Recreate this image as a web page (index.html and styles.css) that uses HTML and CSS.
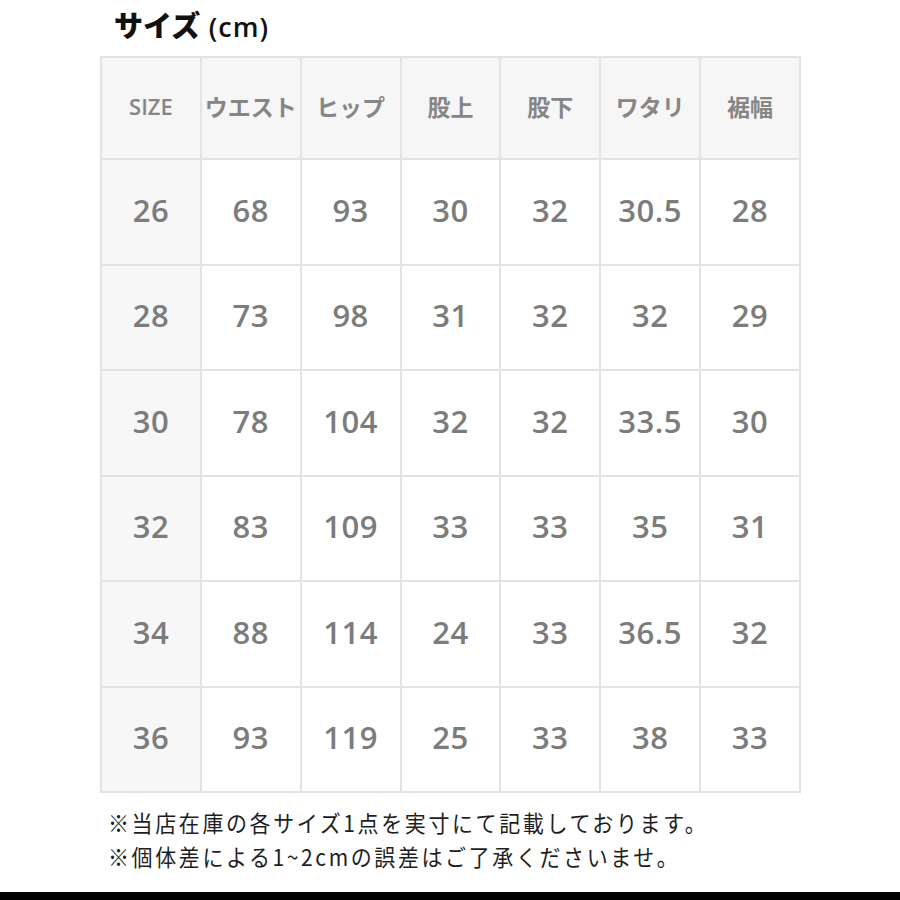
FILE: index.html
```html
<!DOCTYPE html>
<html lang="ja">
<head>
<meta charset="utf-8">
<link rel="stylesheet" href="styles.css">
</head>
<body>
<div class="page">
  <h1 class="title">サイズ <span class="unit">(cm)</span></h1>
  <table class="size-table">
    <thead>
      <tr><th>SIZE</th><th>ウエスト</th><th>ヒップ</th><th>股上</th><th>股下</th><th>ワタリ</th><th>裾幅</th></tr>
    </thead>
    <tbody>
      <tr><td class="sz">26</td><td>68</td><td>93</td><td>30</td><td>32</td><td>30.5</td><td>28</td></tr>
      <tr><td class="sz">28</td><td>73</td><td>98</td><td>31</td><td>32</td><td>32</td><td>29</td></tr>
      <tr><td class="sz">30</td><td>78</td><td>104</td><td>32</td><td>32</td><td>33.5</td><td>30</td></tr>
      <tr><td class="sz">32</td><td>83</td><td>109</td><td>33</td><td>33</td><td>35</td><td>31</td></tr>
      <tr><td class="sz">34</td><td>88</td><td>114</td><td>24</td><td>33</td><td>36.5</td><td>32</td></tr>
      <tr><td class="sz">36</td><td>93</td><td>119</td><td>25</td><td>33</td><td>38</td><td>33</td></tr>
    </tbody>
  </table>
  <div class="notes">
    <p>※当店在庫の各サイズ1点を実寸にて記載しております。</p>
    <p>※個体差による1~2cmの誤差はご了承くださいませ。</p>
  </div>
</div>
<div class="bottom-bar"></div>
</body>
</html>
```
FILE: styles.css
```css
html, body {
  margin: 0;
  padding: 0;
  background: #ffffff;
}
body {
  width: 900px;
  height: 900px;
  position: relative;
  overflow: hidden;
  font-family: "Noto Sans CJK JP", "Noto Sans", sans-serif;
}
.page {
  padding: 0 0 0 100px;
}
.title {
  margin: 0;
  padding: 5px 0 0 14px;
  height: 50px;
  box-sizing: border-box;
  font-size: 29px;
  line-height: 38px;
  font-weight: 900;
  color: #111;
}
.title .unit {
  font-weight: 600;
  font-family: "Open Sans", "Noto Sans CJK JP", sans-serif;
  font-size: 27px;
  letter-spacing: 1px;
  margin-left: 2px;
}
.size-table {
  border-collapse: collapse;
  table-layout: fixed;
  width: 701px;
  margin-top: 6px;
}
.size-table th,
.size-table td {
  border: 2px solid #e3e3e3;
  text-align: center;
  vertical-align: middle;
  padding: 0;
  color: #7a7a7a;
}
.size-table th {
  height: 96px;
  background: #f6f6f6;
  font-size: 23px;
  font-weight: 700;
  color: #868686;
  padding-bottom: 4px;
}
.size-table th:first-child {
  font-family: "Open Sans", sans-serif;
  font-size: 22px;
  font-weight: 600;
}
.size-table td {
  height: 99.5px;
  font-family: "Open Sans", sans-serif;
  font-weight: 600;
  font-size: 31px;
  letter-spacing: 0.5px;
  background: #fff;
  padding-bottom: 4px;
  color: #7c7c7c;
}
.size-table td.sz {
  background: #f7f7f7;
}
.notes {
  padding: 12px 0 0 8px;
}
.notes p {
  margin: 0;
  font-size: 21px;
  line-height: 34px;
  letter-spacing: 2.6px;
  color: #1e1e1e;
  transform: scaleY(1.08);
  transform-origin: left center;
}
.bottom-bar {
  position: absolute;
  left: 0;
  right: 0;
  bottom: 0;
  height: 8px;
  background: #000;
}
```
